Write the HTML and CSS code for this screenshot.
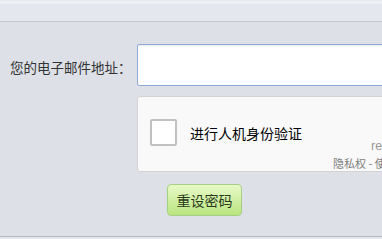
FILE: index.html
```html
<!DOCTYPE html>
<html lang="zh-CN">
<head>
    <meta charset="UTF-8">
    <title>重设密码</title>
    <link rel="stylesheet" href="styles.css">
</head>
<body>
    <div class="topbar"></div>
    <div class="page">
        <div class="form-row">
            <label class="form-label" for="email">您的电子邮件地址：</label>
            <input class="form-input" id="email" type="text">
        </div>
        <div class="captcha">
            <div class="captcha-check"></div>
            <span class="captcha-text">进行人机身份验证</span>
            <div class="captcha-brand">
                <span class="captcha-logo">reCAPTCHA</span>
                <span class="captcha-links">隐私权 - 使用条款</span>
            </div>
        </div>
        <div class="actions">
            <button class="button-green">重设密码</button>
        </div>
    </div>
    <div class="footer"></div>
</body>
</html>
```

FILE: styles.css
```css
* {
    margin: 0;
    padding: 0;
    box-sizing: border-box;
}
body {
    width: 382px;
    height: 239px;
    overflow: hidden;
    background-color: #dde0e7;
    font-family: "Noto Sans CJK SC", "DejaVu Sans", sans-serif;
    color: #222;
}
.topbar {
    height: 22px;
    background-color: #e5e7ee;
    border-top: 1px solid #e8eaef;
    border-bottom: 1px solid #c4c7ce;
    box-shadow: inset 0 3px 0 #eef0f4;
}
.page {
    height: 214px;
    padding-top: 22px;
    overflow: hidden;
}
.form-row {
    display: flex;
    align-items: center;
    height: 42px;
}
.form-label {
    width: 137px;
    flex-shrink: 0;
    padding-left: 10px;
    padding-top: 3px;
    font-size: 13.5px;
    color: #333;
    white-space: nowrap;
}
.form-input {
    width: 260px;
    height: 42px;
    border: 1px solid #8eaad8;
    border-radius: 2px;
    background: #fff;
    box-shadow: inset 0 1px 1px rgba(0, 0, 0, 0.08);
    flex-shrink: 0;
}
.captcha {
    position: relative;
    margin: 10px 0 0 137px;
    width: 304px;
    height: 76px;
    background-color: #f9f9f9;
    border: 1px solid #d3d3d3;
    border-radius: 3px;
    display: flex;
    align-items: center;
    padding-left: 12px;
}
.captcha-check {
    width: 27px;
    height: 27px;
    margin-bottom: 3px;
    background: #fff;
    border: 2px solid #c1c1c1;
    border-radius: 2px;
}
.captcha-text {
    margin-left: 13px;
    font-size: 14px;
    color: #000;
    padding-bottom: 3px;
}
.captcha-brand {
    position: absolute;
    left: 195px;
    top: 43px;
    display: flex;
    flex-direction: column;
    align-items: flex-start;
    white-space: nowrap;
}
.captcha-logo {
    margin-left: 38px;
    font-family: "Liberation Sans", Arial, sans-serif;
    font-size: 12.5px;
    color: #9a9a9a;
    line-height: 13px;
}
.captcha-links {
    margin-top: 3px;
    font-size: 11px;
    color: #808080;
    line-height: 14px;
}
.actions {
    padding: 12px 0 0 167px;
}
.button-green {
    width: 75px;
    height: 32px;
    border: 1px solid #a6cf86;
    border-radius: 4px;
    background: linear-gradient(#e8f9c8, #b9e57f);
    font-family: "Noto Sans CJK SC", sans-serif;
    font-size: 14px;
    color: #2c3a1c;
    cursor: pointer;
}
.footer {
    height: 3px;
    border-top: 1px solid #b4b8c0;
    background-color: #e4e6ec;
}
```
